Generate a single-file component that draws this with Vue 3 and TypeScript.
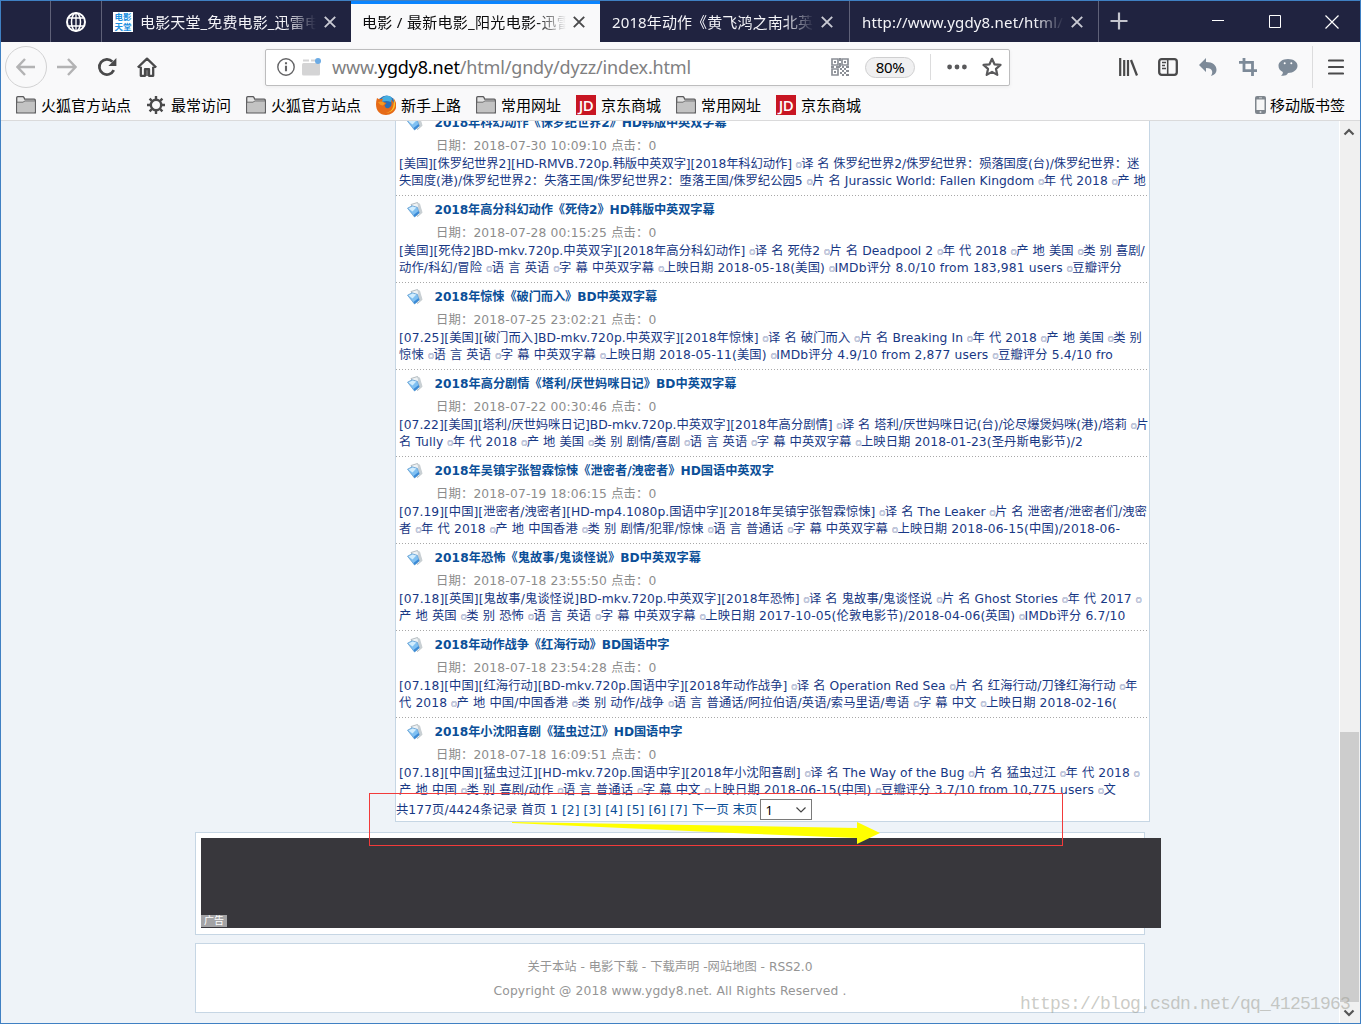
<script setup lang="ts">
import type { Directive } from 'vue'

interface Movie {
  title: string
  titleWidth: number
  date: string
  lines: [string, number][]
}

// Spreads a run of text over the given width by adjusting its letter spacing.
const vFit: Directive<HTMLElement, number> = {
  mounted(el, binding) {
    const count = (el.textContent ?? '').length
    const delta = binding.value - el.getBoundingClientRect().width
    el.style.letterSpacing = `${delta / count}px`
    const rest = binding.value - el.getBoundingClientRect().width
    if (Math.abs(rest) > 0.3) {
      el.style.letterSpacing = `${delta / count + rest / count}px`
    }
  },
}

const movies: Movie[] = [
  {
    title: '2018年科幻动作《侏罗纪世界2》HD韩版中英双字幕', titleWidth: 292, date: '2018-07-30 10:09:10',
    lines: [
      ['[美国][侏罗纪世界2][HD-RMVB.720p.韩版中英双字][2018年科幻动作] ◎译 名 侏罗纪世界2/侏罗纪世界：殒落国度(台)/侏罗纪世界：迷', 740],
      ['失国度(港)/侏罗纪世界2：失落王国/侏罗纪世界2：堕落王国/侏罗纪公园5 ◎片 名 Jurassic World: Fallen Kingdom ◎年 代 2018 ◎产 地', 747],
    ],
  },
  {
    title: '2018年高分科幻动作《死侍2》HD韩版中英双字幕', titleWidth: 280, date: '2018-07-28 00:15:25',
    lines: [
      ['[美国][死侍2]BD-mkv.720p.中英双字][2018年高分科幻动作] ◎译 名 死侍2 ◎片 名 Deadpool 2 ◎年 代 2018 ◎产 地 美国 ◎类 别 喜剧/', 746],
      ['动作/科幻/冒险 ◎语 言 英语 ◎字 幕 中英双字幕 ◎上映日期 2018-05-18(美国) ◎IMDb评分 8.0/10 from 183,981 users ◎豆瓣评分', 723],
    ],
  },
  {
    title: '2018年惊悚《破门而入》BD中英双字幕', titleWidth: 222.5, date: '2018-07-25 23:02:21',
    lines: [
      ['[07.25][美国][破门而入]BD-mkv.720p.中英双字][2018年惊悚] ◎译 名 破门而入 ◎片 名 Breaking In ◎年 代 2018 ◎产 地 美国 ◎类 别', 743],
      ['惊悚 ◎语 言 英语 ◎字 幕 中英双字幕 ◎上映日期 2018-05-11(美国) ◎IMDb评分 4.9/10 from 2,877 users ◎豆瓣评分 5.4/10 fro', 714],
    ],
  },
  {
    title: '2018年高分剧情《塔利/厌世妈咪日记》BD中英双字幕', titleWidth: 302, date: '2018-07-22 00:30:46',
    lines: [
      ['[07.22][美国][塔利/厌世妈咪日记]BD-mkv.720p.中英双字][2018年高分剧情] ◎译 名 塔利/厌世妈咪日记(台)/论尽爆煲妈咪(港)/塔莉 ◎片', 749.5],
      ['名 Tully ◎年 代 2018 ◎产 地 美国 ◎类 别 剧情/喜剧 ◎语 言 英语 ◎字 幕 中英双字幕 ◎上映日期 2018-01-23(圣丹斯电影节)/2', 684],
    ],
  },
  {
    title: '2018年吴镇宇张智霖惊悚《泄密者/洩密者》HD国语中英双字', titleWidth: 339.5, date: '2018-07-19 18:06:15',
    lines: [
      ['[07.19][中国][泄密者/洩密者][HD-mp4.1080p.国语中字][2018年吴镇宇张智霖惊悚] ◎译 名 The Leaker ◎片 名 泄密者/泄密者们/洩密', 748],
      ['者 ◎年 代 2018 ◎产 地 中国香港 ◎类 别 剧情/犯罪/惊悚 ◎语 言 普通话 ◎字 幕 中英双字幕 ◎上映日期 2018-06-15(中国)/2018-06-', 721],
    ],
  },
  {
    title: '2018年恐怖《鬼故事/鬼谈怪说》BD中英双字幕', titleWidth: 266.5, date: '2018-07-18 23:55:50',
    lines: [
      ['[07.18][英国][鬼故事/鬼谈怪说]BD-mkv.720p.中英双字][2018年恐怖] ◎译 名 鬼故事/鬼谈怪说 ◎片 名 Ghost Stories ◎年 代 2017 ◎', 742.5],
      ['产 地 英国 ◎类 别 恐怖 ◎语 言 英语 ◎字 幕 中英双字幕 ◎上映日期 2017-10-05(伦敦电影节)/2018-04-06(英国) ◎IMDb评分 6.7/10', 726.5],
    ],
  },
  {
    title: '2018年动作战争《红海行动》BD国语中字', titleWidth: 235, date: '2018-07-18 23:54:28',
    lines: [
      ['[07.18][中国][红海行动][BD-mkv.720p.国语中字][2018年动作战争] ◎译 名 Operation Red Sea ◎片 名 红海行动/刀锋红海行动 ◎年', 738.5],
      ['代 2018 ◎产 地 中国/中国香港 ◎类 别 动作/战争 ◎语 言 普通话/阿拉伯语/英语/索马里语/粤语 ◎字 幕 中文 ◎上映日期 2018-02-16(', 718],
    ],
  },
  {
    title: '2018年小沈阳喜剧《猛虫过江》HD国语中字', titleWidth: 248, date: '2018-07-18 16:09:51',
    lines: [
      ['[07.18][中国][猛虫过江][HD-mkv.720p.国语中字][2018年小沈阳喜剧] ◎译 名 The Way of the Bug ◎片 名 猛虫过江 ◎年 代 2018 ◎', 740.5],
      ['产 地 中国 ◎类 别 喜剧/动作 ◎语 言 普通话 ◎字 幕 中文 ◎上映日期 2018-06-15(中国) ◎豆瓣评分 3.7/10 from 10,775 users ◎文', 717],
    ],
  },
]

const parts = (text: string): string[] => text.split(/(◎)/).filter((p) => p !== '')

const bookmarks = [
  { icon: 'folder', label: '火狐官方站点', wide: true },
  { icon: 'gear', label: '最常访问', wide: false },
  { icon: 'folder', label: '火狐官方站点', wide: true },
  { icon: 'fox', label: '新手上路', wide: false },
  { icon: 'folder', label: '常用网址', wide: false },
  { icon: 'jd', label: '京东商城', wide: false },
  { icon: 'folder', label: '常用网址', wide: false },
  { icon: 'jd', label: '京东商城', wide: false },
]
</script>

<template>
  <div class="window">
    <header class="tabs">
      <div class="tab blank"></div>
      <div class="tab pin">
        <svg width="22" height="22" viewBox="0 0 22 22" fill="none" stroke="#fff">
          <circle cx="11" cy="11" r="9" stroke-width="2" />
          <ellipse cx="11" cy="11" rx="4.5" ry="9" stroke-width="1.5" />
          <path d="M11 2v18M3.5 7h15M3.5 15h15" stroke-width="1.3" />
        </svg>
      </div>
      <div class="tab t1">
        <span class="favicon"><b>电影</b><b>天堂</b></span>
        <span class="label l1"><span v-fit="180">电影天堂_免费电影_迅雷电</span></span>
        <svg class="x" viewBox="0 0 12 12"><path d="M.8.8l10.4 10.4M11.2.8L.8 11.2" /></svg>
      </div>
      <div class="tab active">
        <span class="label l2"><span v-fit="210">电影 / 最新电影_阳光电影-迅雷</span></span>
        <svg class="x" viewBox="0 0 12 12"><path d="M.8.8l10.4 10.4M11.2.8L.8 11.2" /></svg>
      </div>
      <div class="tab t3">
        <span class="label l3"><span v-fit="201">2018年动作《黄飞鸿之南北英</span></span>
        <svg class="x" viewBox="0 0 12 12"><path d="M.8.8l10.4 10.4M11.2.8L.8 11.2" /></svg>
      </div>
      <div class="tab t4">
        <span class="label l4"><span v-fit="201">http://www.ygdy8.net/html/</span></span>
        <svg class="x" viewBox="0 0 12 12"><path d="M.8.8l10.4 10.4M11.2.8L.8 11.2" /></svg>
      </div>
      <svg class="plus" width="18" height="18" viewBox="0 0 18 18"><path d="M9 .5v17M.5 9h17" stroke="#c4c5ce" stroke-width="2.2" /></svg>
      <div class="controls">
        <svg width="12" height="13" viewBox="0 0 12 13"><path d="M0 5.5h12" stroke="#fff" /></svg>
        <svg width="12" height="13" viewBox="0 0 12 13"><path d="M.5.5h11v12H.5z" fill="none" stroke="#fff" /></svg>
        <svg width="14" height="14" viewBox="0 0 14 14"><path d="M.5.5l13 13M13.5.5l-13 13" stroke="#fff" stroke-width="1.2" /></svg>
      </div>
    </header>

    <nav class="toolbar">
      <div class="back">
        <svg width="20" height="18" viewBox="0 0 20 18"><path d="M19 9H1.5M9 1L1.5 9 9 17" /></svg>
      </div>
      <svg class="fwd" width="20" height="18" viewBox="0 0 20 18"><path d="M0 9h18.5M11 1l7.5 8-7.5 8" /></svg>
      <svg class="reload" width="20" height="20" viewBox="0 0 20 20" fill="none">
        <path d="M16.8 13.2A7.6 7.6 0 1 1 15.4 4.6" stroke="#4a4a4b" stroke-width="2.7" />
        <path d="M19.4 1v8h-8z" fill="#4a4a4b" />
      </svg>
      <svg class="home" width="20" height="20" viewBox="0 0 20 20" fill="none" stroke="#4a4a4b" stroke-width="2.3" stroke-linejoin="round">
        <path d="M.8 10.5L10 1.6l9.2 8.9M3.8 9.8v9h4.2v-6.6h4v6.6h4.2v-9" />
        <path d="M10 13v6" stroke-width="1.5" />
      </svg>
      <div class="urlbar">
        <svg class="info" width="18" height="18" viewBox="0 0 18 18" fill="none" stroke="#646466">
          <circle cx="9" cy="9" r="8.2" stroke-width="1.4" /><path d="M9 7.7v5.6M9 4.2v2" stroke-width="2.1" />
        </svg>
        <svg class="perm" width="20" height="18" viewBox="0 0 20 18">
          <path d="M1 1.5h6v2H1zM9 1.5h5v2H9z" fill="#d4d4d5" /><rect y="5" width="18" height="12.5" rx="1.5" fill="#d4d4d5" />
          <circle cx="16" cy="3" r="3" fill="#6cabe4" />
        </svg>
        <div class="url"><span v-fit="359"><i>www.</i>ygdy8.net<i>/html/gndy/dyzz/index.html</i></span></div>
        <svg class="qr" width="18" height="18" viewBox="0 0 18 18" fill="none" stroke="#8b8f96" stroke-width="1.7">
          <path d="M1 1h6v6H1zM11 1h6v6h-6zM1 11h6v6H1z" />
          <path d="M3 4h2M13 4h2M3 14h2M9 0v3M9 5v4M0 9h3M5 9h4M11 9h2M15 9h3M9 11h2M13 11h2M11 13h2M15 13h3M9 15h2M13 15h2M11 17h2M15 17h3" stroke-width="2" />
        </svg>
        <div class="zoom">80%</div>
        <div class="sep"></div>
        <svg class="dots" width="20" height="6" viewBox="0 0 20 6" fill="#59595b"><circle cx="2.6" cy="3" r="2.4" /><circle cx="10" cy="3" r="2.4" /><circle cx="17.4" cy="3" r="2.4" /></svg>
        <svg class="star" width="20" height="20" viewBox="0 0 20 20"><path d="M10 1.8l2.5 5.5 6 .6-4.5 4 1.3 6L10 14.9l-5.3 3 1.3-6-4.5-4 6-.6z" fill="none" stroke="#59595b" stroke-width="2.2" stroke-linejoin="round" /></svg>
      </div>
      <div class="actions">
        <svg width="20" height="18" viewBox="0 0 20 18" stroke="#4a4a4b" fill="none"><path d="M2.2 0v18M6.2 2v16M10 2v16" stroke-width="2.2" /><path d="M13 2l6 15.5" stroke-width="2.3" /></svg>
        <svg width="20" height="18" viewBox="0 0 20 18" stroke="#4a4a4b" fill="none"><rect x="1.2" y="1.2" width="17.6" height="15.6" rx="2.5" stroke-width="2.3" /><path d="M9.7 2v14" stroke-width="1.6" /><path d="M4 4.5h4M4 7.5h3M4 10.5h4" stroke-width="1.3" /></svg>
        <svg width="20" height="18" viewBox="0 0 20 18" fill="#7d8a98"><path d="M8 0v4c7 0 10.5 3.5 10.5 8 0 3-2 5-5.5 6 2-3 2.5-8-5-8v4L1 7z" /></svg>
        <svg width="20" height="18" viewBox="0 0 20 18" stroke="#7d8a98" fill="none" stroke-width="2.8"><path d="M1 4.4h13.5V18M6 0v12.7h13" /></svg>
        <svg width="20" height="18" viewBox="0 0 20 18"><path d="M10 1c5.5 0 9.5 2.8 9.5 6.8S15.5 15 10 15c-1 3-5 3-7 2.5 1.5-1 2-2 1.800-3.500C2 12.700.5 10.500.5 7.800.5 3.800 4.500 1 10 1z" fill="#7d8a98" /><circle cx="6.700" cy="5.200" r="1" fill="#fff" /><circle cx="13.300" cy="5.200" r="1" fill="#fff" /></svg>
      </div>
      <svg class="menu" width="16" height="16" viewBox="0 0 16 16"><path d="M1 1.500h14M1 8h14M1 14.500h14" stroke="#4a4a4b" stroke-width="2.200" stroke-linecap="round" /></svg>
    </nav>

    <nav class="bookmarks">
      <div v-for="(b, i) in bookmarks" :key="i" class="bm" :class="{ wide: b.wide, slim: b.icon === 'gear' }">
        <svg v-if="b.icon === 'folder'" width="20" height="18" viewBox="0 0 20 18">
          <path d="M.7 16.800V1.700q0-1 1-1h5q1 0 1.400 1l.6 1.500h9.600q1 0 1 1v12.600z" fill="#e4e4e4" stroke="#59595b" stroke-width="1.300" />
          <path d="M1.500 6.500h6l2-1.500h9v11.200h-17z" fill="#c3c3c3" /><path d="M1 6.200h6l2-1.300h10" fill="none" stroke="#6a6a6b" />
        </svg>
        <svg v-else-if="b.icon === 'gear'" width="18" height="18" viewBox="0 0 18 18" fill="none" stroke="#4a4a4b">
          <circle cx="9" cy="9" r="5.200" stroke-width="2.400" />
          <path d="M9 0v3M9 15v3M0 9h3M15 9h3M2.600 2.600l2.200 2.200M13.200 13.200l2.200 2.200M15.400 2.600l-2.200 2.200M4.800 13.200l-2.200 2.200" stroke-width="2.400" />
        </svg>
        <svg v-else-if="b.icon === 'fox'" width="20" height="20" viewBox="0 0 20 20">
          <circle cx="10.500" cy="9.500" r="9" fill="#2a6fb5" />
          <path d="M6 3q5-4 9-1 2 3 0 5-5-2-9 0z" fill="#45aee0" />
          <path d="M1 3l2 1.200 4-.4-1 2.700 4.500 1.500-2 2.500q1 3.500 4.500 2.500 3-1.500 2.500-5l-.5-3.500L18 8l-.2-4.500C24 12 18 20 10 20S-2 13 1 3z" fill="#e66a17" />
          <path d="M17.800 4c3.700 8-1.300 14-8 13.500 6 0 8.500-5 8-13.500z" fill="#fbc62f" />
          <path d="M2 7q3-1 5 0l2 1.500-2 2q-3 0-5-3.500z" fill="#f39a20" />
        </svg>
        <span v-else class="jd">JD</span>
        <span class="bm-label">{{ b.label }}</span>
      </div>
      <div class="mobile">
        <svg width="11" height="18" viewBox="0 0 11 18"><rect width="11" height="18" rx="2" fill="#7f868d" /><rect x="1.500" y="3.500" width="8" height="10.500" fill="#f7f7f7" /><path d="M4 1.800h3" stroke="#c9cdd1" /><circle cx="5.500" cy="16" r="1" fill="#d9dde1" /></svg>
        <span>移动版书签</span>
      </div>
    </nav>

    <div class="body">
      <main class="page">
        <section class="list">
          <article v-for="m in movies" :key="m.title" class="movie">
            <h3>
              <svg width="16" height="16" viewBox="0 0 16 16">
                <path d="M4 2.500L10.500.5l4.500 10-4.500 4z" fill="#eef2f4" stroke="#a3adb3" stroke-width=".8" />
                <path d="M10.500.5l2.500 1.300 2.300 8.200-3 3z" fill="#c9d0d4" />
                <path d="M.5 6.200l4.600-2.400 5.400 1.600 1.700 5.600L7.500 15z" fill="#7fc0f2" stroke="#5a97cc" stroke-width=".7" />
                <path d="M1.500 6.400l4-2 3.800 1.200-3.800 4z" fill="#d3edfd" />
                <path d="M7.500 15l4.700-4-.6-2L6.500 13z" fill="#3b8ad6" />
              </svg>
              <span v-fit="m.titleWidth">{{ m.title }}</span>
            </h3>
            <p class="date"><span v-fit="220.5">日期：{{ m.date }} 点击：0</span></p>
            <p v-for="(l, k) in m.lines" :key="k" class="line">
              <span v-fit="l[1]"><template v-for="(p, n) in parts(l[0])" :key="n"><b v-if="p === '◎'">◎</b><template v-else>{{ p }}</template></template></span>
            </p>
          </article>
          <div class="pager">
            <span v-fit="361.5">共177页/4424条记录 首页 1 <a>[2]</a> <a>[3]</a> <a>[4]</a> <a>[5]</a> <a>[6]</a> <a>[7]</a> <a>下一页</a> <a>末页</a></span>
            <div class="select">1<svg width="10" height="6" viewBox="0 0 10 6"><path d="M.5.500L5 5 9.500.5" fill="none" stroke="#444" stroke-width="1.200" /></svg></div>
          </div>
        </section>
        <section class="ad"><div class="banner"><span>广告</span></div></section>
        <footer class="foot">
          <p><span v-fit="285">关于本站 - 电影下载 - 下载声明 -网站地图 - RSS2.0</span></p>
          <p><span v-fit="353">Copyright @ 2018 www.ygdy8.net. All Rights Reserved .</span></p>
        </footer>
      </main>
      <aside class="scroll">
        <svg width="12" height="8" viewBox="0 0 12 8"><path d="M1.500 6.500L6 2l4.500 4.500" /></svg>
        <div class="thumb"></div>
        <svg width="12" height="8" viewBox="0 0 12 8"><path d="M1.500 1.500L6 6l4.500-4.500" /></svg>
      </aside>
    </div>

    <div class="mark"></div>
    <svg class="arrow" width="370" height="26" viewBox="0 0 370 26"><path d="M0 2L238 6l107 2V2l23 11-23 11v-6l-107-4.300L0 3z" fill="#ff0" /></svg>
    <div class="watermark"><span v-fit="330">https://blog.csdn.net/qq_41251963</span></div>
  </div>
</template>

<style>
body {
  margin: 0;
  overflow: hidden;
}
</style>

<style scoped>
* {
  box-sizing: border-box;
}
p,
h3 {
  margin: 0;
}
svg {
  display: block;
  flex: none;
}
.window {
  position: relative;
  display: flex;
  flex-direction: column;
  width: 1361px;
  height: 1024px;
  overflow: hidden;
  border: 1px solid #3f80c3;
  background: #eef3f8;
  font: 15px/20px 'Noto Sans', 'Noto Sans CJK SC', sans-serif;
  color: #000;
}
.tabs {
  display: flex;
  flex: none;
  height: 41px;
  background: #202340;
  color: #f4f4f8;
}
.tab {
  display: flex;
  align-items: center;
  flex: none;
  white-space: nowrap;
  border-right: 1px solid #5f6178;
}
.blank {
  width: 50px;
}
.pin {
  width: 51px;
  justify-content: center;
}
.t1 {
  width: 249px;
  padding-left: 11px;
  border: 0;
}
.active {
  width: 249px;
  padding-left: 11px;
  border: 0;
  box-shadow: inset 0 3px #0a84ff;
  background: #f9f9fa;
  color: #0c0c0d;
}
.t3 {
  width: 250px;
  padding-left: 12px;
}
.t4 {
  width: 249px;
  padding-left: 12px;
}
.favicon {
  display: flex;
  flex-direction: column;
  width: 20px;
  height: 20px;
  margin-right: 7px;
  background: #fff;
  color: #1c8fe0;
  text-align: center;
}
.favicon b {
  font-size: 8.5px;
  line-height: 10px;
  height: 10px;
}
.label {
  flex: none;
  overflow: hidden;
  -webkit-mask-image: linear-gradient(90deg, #000 calc(100% - 30px), transparent);
  mask-image: linear-gradient(90deg, #000 calc(100% - 30px), transparent);
}
.l1 {
  width: 176px;
}
.l2 {
  width: 204px;
}
.l3,
.l4 {
  width: 202px;
}
.x {
  width: 12px;
  height: 12px;
  margin-left: 7px;
  fill: none;
  stroke: #c9cad3;
  stroke-width: 1.9;
}
.t1 .x {
  margin-left: 8px;
}
.active .x {
  stroke: #4a4a4b;
}
.plus {
  margin: 11px 0 0 11px;
}
.controls {
  display: flex;
  align-items: center;
  gap: 45px;
  margin-left: 84px;
}
.controls svg:last-child {
  margin-left: -1px;
}
.toolbar {
  display: flex;
  align-items: center;
  flex: none;
  height: 50px;
  background: #f9f9fa;
}
.back {
  display: grid;
  place-items: center;
  width: 42px;
  height: 42px;
  margin-left: 4px;
  border: 1px solid #d2d2d3;
  border-radius: 50%;
}
.back svg,
.fwd {
  fill: none;
  stroke: #b3b3b4;
  stroke-width: 2.4;
}
.fwd {
  margin-left: 10px;
}
.reload {
  margin-left: 20px;
}
.home {
  margin-left: 20px;
}
.urlbar {
  display: flex;
  align-items: center;
  flex: none;
  width: 745px;
  height: 37px;
  margin-left: 108px;
  border: 1px solid #bdbdbe;
  border-radius: 2px;
  background: #fff;
  box-shadow: 0 1px 4px rgba(0, 0, 0, 0.06);
}
.info {
  margin-left: 11px;
}
.perm {
  margin-left: 7px;
}
.url {
  width: 359px;
  margin-left: 10px;
  font-size: 18px;
  line-height: 30px;
  white-space: nowrap;
}
.url i {
  font-style: normal;
  color: #808081;
}
.qr {
  margin-left: 140px;
}
.zoom {
  width: 50px;
  height: 21px;
  margin-left: 16px;
  border: 1px solid #cfcfd0;
  border-radius: 11px;
  background: #f0f0f1;
  font-size: 15px;
  line-height: 19px;
  text-align: center;
  letter-spacing: -0.4px;
}
.sep {
  width: 1px;
  height: 26px;
  margin-left: 15px;
  background: #dcdcdd;
}
.dots {
  margin-left: 16px;
}
.star {
  margin-left: 15px;
}
.actions {
  display: flex;
  gap: 20px;
  margin-left: 108px;
}
.menu {
  margin-left: 30px;
}
.actions::after {
  content: '';
  width: 1px;
  height: 42px;
  margin: -12px -15px -12px -6px;
  background: #dcdcdd;
}
.bookmarks {
  display: flex;
  align-items: center;
  flex: none;
  height: 29px;
  padding: 0 15px 3px 15px;
  border-bottom: 1px solid #dadadb;
  background: #f9f9fa;
  white-space: nowrap;
}
.bm {
  display: flex;
  align-items: center;
  gap: 5px;
  width: 100px;
}
.bm.wide {
  width: 130px;
}
.bm.slim {
  padding-left: 1px;
  gap: 6px;
}
.jd {
  width: 20px;
  height: 20px;
  background: #c81623;
  color: #fff;
  font: 600 15px/20px 'Open Sans', sans-serif;
  letter-spacing: -0.5px;
  text-align: center;
}
.mobile {
  display: flex;
  align-items: center;
  gap: 4px;
  margin-left: auto;
}
.body {
  display: flex;
  flex: 1;
  min-height: 0;
}
.page {
  flex: 1;
  overflow: hidden;
  font: 12.3px/17px 'DejaVu Sans', 'Noto Sans CJK SC', sans-serif;
  color: #183884;
  white-space: nowrap;
}
.list {
  width: 755px;
  height: 713px;
  margin: -12px 0 0 394px;
  border: solid #c6d6e4;
  border-width: 0 1px 1px;
  background: #fff;
}
.movie {
  height: 87px;
  padding-top: 1px;
  background: linear-gradient(90deg, #a8a8a8 50%, transparent 0) 0 86px / 3px 1px repeat-x;
  margin-right: 1px;
}
.movie:nth-last-child(2) {
  height: 80px;
  background: none;
}
.movie h3 {
  display: flex;
  align-items: center;
  gap: 11.5px;
  height: 27px;
  padding-left: 11px;
  font-size: 12.2px;
  color: #0b4f98;
}
.movie h3 svg {
  margin-top: -1px;
}
.date {
  height: 19px;
  padding-left: 40px;
  line-height: 19px;
  color: #8c8c8c;
}
.line {
  height: 17px;
  padding-left: 3px;
}
.line b {
  display: inline-block;
  width: 5.5px;
  font-family: 'Noto Sans CJK SC', sans-serif;
  font-size: 6px;
  font-weight: 700;
  line-height: 10px;
  letter-spacing: 0;
  vertical-align: 1.5px;
}
.pager {
  display: flex;
  align-items: center;
  gap: 3px;
  height: 23px;
}
.pager > span {
  padding-top: 1px;
}
.pager a {
  color: #0b4f98;
}
.select {
  display: flex;
  align-items: center;
  justify-content: space-between;
  width: 52px;
  height: 21px;
  padding: 1px 5px 0 4px;
  border: 1px solid #7a7a7a;
  color: #000;
  font-family: 'Noto Sans', sans-serif;
  font-size: 13px;
}
.ad {
  width: 950px;
  height: 103px;
  margin: 10px 0 0 194px;
  padding: 5px;
  border: 1px solid #c6d6e4;
  background: #fff;
}
.banner {
  display: flex;
  align-items: flex-end;
  width: 960px;
  height: 90px;
  padding-bottom: 1px;
  background: #38373c;
}
.banner span {
  width: 26px;
  height: 12px;
  background: #a3a3a5;
  color: #fff;
  font-size: 10px;
  line-height: 12px;
  text-align: center;
}
.foot {
  width: 950px;
  height: 70px;
  margin: 8px 0 0 194px;
  padding-top: 11px;
  border: 1px solid #c6d6e4;
  background: #fff;
  color: #959595;
  line-height: 24px;
  text-align: center;
}
.scroll {
  display: flex;
  flex-direction: column;
  align-items: flex-start;
  width: 21px;
  padding: 7px 0 6px;
  border-left: 1px solid #fff;
  background: #f0f0f0;
}
.scroll svg {
  margin-left: 3px;
  fill: none;
  stroke: #555;
  stroke-width: 2.2;
}
.thumb {
  width: 19px;
  height: 270px;
  margin: 596px 0 auto;
  background: #cdcdcd;
}
.mark {
  position: absolute;
  left: 368px;
  top: 792px;
  width: 694px;
  height: 53px;
  border: 1px solid #f23a3a;
}
.arrow {
  position: absolute;
  left: 511px;
  top: 819px;
}
.watermark {
  position: absolute;
  left: 1019px;
  top: 992px;
  font: 18px/22px 'Liberation Mono', monospace;
  color: rgba(160, 160, 150, 0.55);
  white-space: nowrap;
}
</style>
